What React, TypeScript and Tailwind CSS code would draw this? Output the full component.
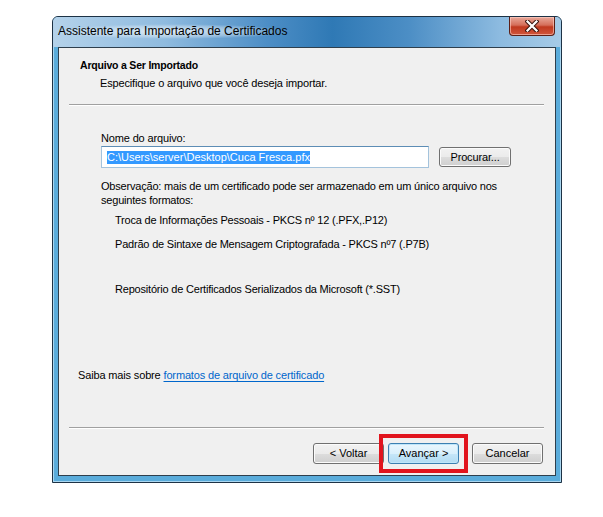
import React from "react";

const FONT = "font-['Liberation_Sans',Tahoma,sans-serif]";

function WinButton({ label, primary = false }: { label: string; primary?: boolean }) {
  return (
    <button
      type="button"
      className={
        "h-[21px] w-[71px] rounded-[3px] border text-[11px] leading-none text-black " +
        (primary
          ? "border-[#3c7fb1] bg-[linear-gradient(#eaf6fd,#d9f0fc_50%,#c6e6f8_51%,#b2dcf3)] shadow-[inset_0_0_0_1px_#bfe6fa]"
          : "border-[#707070] bg-[linear-gradient(#f2f2f2,#ebebeb_50%,#dddddd_51%,#cfcfcf)] shadow-[inset_0_0_0_1px_#fbfbfb]")
      }
    >
      {label}
    </button>
  );
}

function CloseGlyph() {
  return (
    <svg width="14" height="12" viewBox="0 0 14 12">
      <path d="M2.5 1.5 L11.5 10.5 M11.5 1.5 L2.5 10.5" stroke="#3a1410" strokeWidth="4.2" strokeLinecap="square" />
      <path d="M2.5 1.5 L11.5 10.5 M11.5 1.5 L2.5 10.5" stroke="#ffffff" strokeWidth="2.2" strokeLinecap="square" />
    </svg>
  );
}

export default function App() {
  return (
    <div className={"min-h-[517px] w-[603px] bg-white pt-[16px] " + FONT}>
      <div className="relative ml-[52px] flex h-[467px] w-[510px] flex-col rounded-t-[6px] border border-[#1d3245] bg-[#5aacdb] shadow-[inset_0_0_0_1px_#a9d6f0]">
        {/* title bar */}
        <div className="flex h-[30px] shrink-0 items-start justify-between rounded-t-[5px] bg-[linear-gradient(90deg,#b4d2ea_0%,#8fbbdf_22%,#4d8ec6_42%,#2f79b5_55%,#4c8ec5_70%,#8dbbe0_88%,#a6cbe7_100%)]">
          <div className="mt-[7px] ml-[1px] rounded-full bg-[radial-gradient(closest-side,rgba(255,255,255,0.7),rgba(255,255,255,0.3)_70%,rgba(255,255,255,0))] px-[4px] text-[12px] leading-[15px] text-black">
            Assistente para Importação de Certificados
          </div>
          <div className="mr-[6px] flex h-[19px] w-[46px] items-center justify-center rounded-b-[4px] border border-t-0 border-[#5c1f16] bg-[linear-gradient(#e9a99a,#d56e5a_45%,#c0391f_55%,#d0563d)] shadow-[inset_0_0_0_1px_rgba(255,210,200,0.6)]">
            <CloseGlyph />
          </div>
        </div>

        {/* client area */}
        <div className="mx-[5px] mb-[6px] flex flex-1 flex-col border border-[#2e3f4d] bg-[#f0f0f0] text-[11px] leading-[13px] tracking-[-0.15px] text-black">
          <div className="pt-[11px] pl-[21px] text-[10.5px] font-bold tracking-[-0.2px]">Arquivo a Ser Importado</div>
          <div className="mt-[5px] pl-[41px]">Especifique o arquivo que você deseja importar.</div>
          <div className="mt-[14px] mr-[11px] ml-[10px] border-t border-b border-t-[#a0a0a0] border-b-white" />

          <div className="mt-[26px] pl-[42px]">Nome do arquivo:</div>
          <div className="mt-[1px] flex items-start pl-[42px]">
            <div className="flex h-[22px] w-[328px] items-center border border-[#a4c3dc] border-t-[#5d8db5] bg-white pl-[5px]">
              <span className="bg-[#3399ff] leading-[13px] tracking-normal text-white">C:\Users\server\Desktop\Cuca Fresca.pfx</span>
            </div>
            <div className="mt-[1px] ml-[10px]">
              <button
                type="button"
                className="h-[20px] w-[72px] rounded-[3px] border border-[#707070] bg-[linear-gradient(#f2f2f2,#ebebeb_50%,#dddddd_51%,#cfcfcf)] text-[11px] leading-none shadow-[inset_0_0_0_1px_#fbfbfb]"
              >
                Procurar...
              </button>
            </div>
          </div>

          <div className="mt-[11px] pl-[42px] leading-[14px] tracking-[-0.2px]">
            Observação: mais de um certificado pode ser armazenado em um único arquivo nos
            <br />
            seguintes formatos:
          </div>
          <div className="mt-[7px] pl-[56px] tracking-[-0.2px]">Troca de Informações Pessoais - PKCS nº 12 (.PFX,.P12)</div>
          <div className="mt-[11px] pl-[56px] tracking-[-0.2px]">Padrão de Sintaxe de Mensagem Criptografada - PKCS nº7 (.P7B)</div>
          <div className="mt-[32px] pl-[56px] tracking-[-0.2px]">Repositório de Certificados Serializados da Microsoft (*.SST)</div>

          <div className="mt-[73px] pl-[19px]">
            Saiba mais sobre <span className="text-[#0066cc] underline underline-offset-[2px]">formatos de arquivo de certificado</span>
          </div>

          <div className="mt-auto mr-[11px] ml-[10px] border-t border-b border-t-[#a0a0a0] border-b-white" />
          <div className="mt-[14px] mb-[11px] flex justify-end pr-[12px] tracking-normal">
            <WinButton label="< Voltar" />
            <div className="relative ml-[4px]">
              <WinButton label="Avançar >" primary />
              <div className="pointer-events-none absolute -top-[9px] -right-[9px] -bottom-[9px] -left-[9px] border-[4px] border-[#e1141d]" />
            </div>
            <div className="ml-[13px]">
              <WinButton label="Cancelar" />
            </div>
          </div>
        </div>
      </div>
    </div>
  );
}
